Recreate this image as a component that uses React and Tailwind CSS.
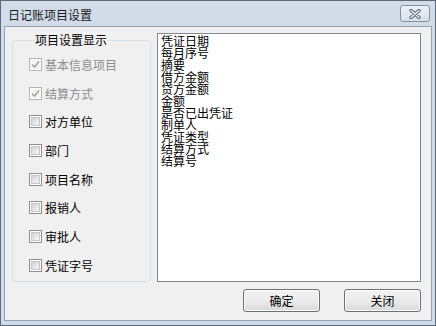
import React from 'react';

const font = { fontFamily: '"Noto Sans CJK SC", "Noto Sans", sans-serif' };

function CheckBox({ checked, disabled }) {
  return (
    <div
      className={`w-[13px] h-[13px] border p-[1px] bg-white shrink-0 ${
        disabled ? 'border-[#b4b4b4]' : 'border-[#8e8f8f]'
      }`}
    >
      <div
        className={`w-full h-full flex items-center justify-center ${
          disabled ? 'bg-[#f4f4f4]' : 'bg-gradient-to-br from-[#d2d2d2] to-[#f7f7f7] border border-[#c6c6c6]'
        }`}
      >
        {checked && (
          <svg width="9" height="9" viewBox="0 0 9 9">
            <path d="M1 4.5 L3.5 7 L8 1.5" fill="none" stroke="#a3a3a3" strokeWidth="1.6" />
          </svg>
        )}
      </div>
    </div>
  );
}

export default function App() {
  const options = [
    { label: '基本信息项目', checked: true, disabled: true },
    { label: '结算方式', checked: true, disabled: true },
    { label: '对方单位' },
    { label: '部门' },
    { label: '项目名称' },
    { label: '报销人' },
    { label: '审批人' },
    { label: '凭证字号' },
  ];

  const items = [
    '凭证日期', '每月序号', '摘要', '借方金额', '贷方金额', '金额',
    '是否已出凭证', '制单人', '凭证类型', '结算方式', '结算号',
  ];

  return (
    <div className="w-[436px] h-[326px] border border-[#5d6a79] bg-[#d1dce8] flex flex-col px-[3px] pb-[4px] text-black" style={font}>
      {/* title bar */}
      <div className="h-[25px] flex items-center justify-between shrink-0">
        <span className="pl-[4px] pt-[2px] text-[12px] text-[#1a1a1a]">日记账项目设置</span>
        <div className="w-[30px] h-[17px] mr-[2px] rounded-[3px] border border-[#8592a3] bg-gradient-to-b from-[#eef2f7] to-[#d7e0ea] flex items-center justify-center">
          <svg width="14" height="10" viewBox="0 0 14 10">
            <path d="M3 1.5 L11 8.5 M11 1.5 L3 8.5" stroke="#4e5866" strokeWidth="3.4" strokeLinecap="round" />
            <path d="M3 1.5 L11 8.5 M11 1.5 L3 8.5" stroke="#f4f6f9" strokeWidth="1.6" strokeLinecap="round" />
          </svg>
        </div>
      </div>

      {/* client area */}
      <div className="flex-1 border border-[#97a3b1] bg-[#f0f0f0] flex flex-col">
        <div className="flex items-start pt-[6px] pl-[7px] gap-[6px]">
          <fieldset className="w-[139px] h-[249px] border border-[#d5dfe5] rounded-[3px] pl-[16px] pt-[11px]">
            <legend className="ml-[5px] px-[1px] text-[12px] leading-[14px]">项目设置显示</legend>
            <div className="flex flex-col gap-[15.7px]">
              {options.map((o) => (
                <div key={o.label} className="flex items-center gap-[3px] h-[13px]">
                  <CheckBox checked={o.checked} disabled={o.disabled} />
                  <span className={`text-[12px] leading-[13px] ${o.disabled ? 'text-[#8d8d8d]' : 'text-black'}`}>
                    {o.label}
                  </span>
                </div>
              ))}
            </div>
          </fieldset>

          <div className="w-[264px] h-[249px] border border-[#828790] bg-white pl-[3px] pt-[1px]">
            {items.map((t) => (
              <div key={t} className="text-[12px] leading-[12px]">{t}</div>
            ))}
          </div>
        </div>

        <div className="flex justify-end gap-[24px] pr-[10px] mt-[7px]">
          {['确定', '关闭'].map((b) => (
            <button
              key={b}
              className="w-[77px] h-[23px] rounded-[3px] border border-[#707070] bg-gradient-to-b from-[#f2f2f2] via-[#ebebeb] to-[#d9d9d9] text-[12px] leading-none shadow-[inset_0_0_0_1px_#fcfcfc]"
            >
              {b}
            </button>
          ))}
        </div>
      </div>
    </div>
  );
}
